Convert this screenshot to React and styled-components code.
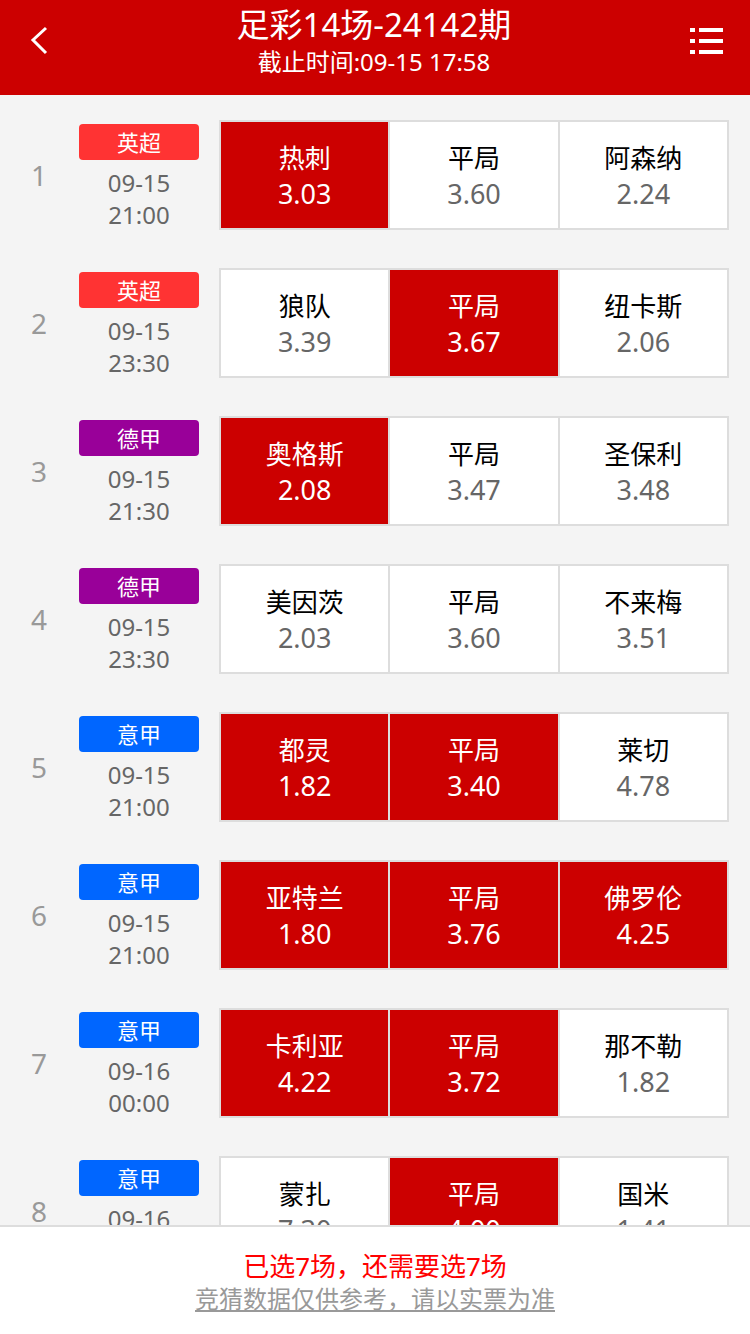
import React from 'react'
import styled, { createGlobalStyle } from 'styled-components'

const matches = [
  { league: '英超', color: '#ff3333', date: '09-15', time: '21:00', picks: [['热刺', '3.03', true], ['平局', '3.60', false], ['阿森纳', '2.24', false]] },
  { league: '英超', color: '#ff3333', date: '09-15', time: '23:30', picks: [['狼队', '3.39', false], ['平局', '3.67', true], ['纽卡斯', '2.06', false]] },
  { league: '德甲', color: '#990099', date: '09-15', time: '21:30', picks: [['奥格斯', '2.08', true], ['平局', '3.47', false], ['圣保利', '3.48', false]] },
  { league: '德甲', color: '#990099', date: '09-15', time: '23:30', picks: [['美因茨', '2.03', false], ['平局', '3.60', false], ['不来梅', '3.51', false]] },
  { league: '意甲', color: '#0066ff', date: '09-15', time: '21:00', picks: [['都灵', '1.82', true], ['平局', '3.40', true], ['莱切', '4.78', false]] },
  { league: '意甲', color: '#0066ff', date: '09-15', time: '21:00', picks: [['亚特兰', '1.80', true], ['平局', '3.76', true], ['佛罗伦', '4.25', true]] },
  { league: '意甲', color: '#0066ff', date: '09-16', time: '00:00', picks: [['卡利亚', '4.22', true], ['平局', '3.72', true], ['那不勒', '1.82', false]] },
  { league: '意甲', color: '#0066ff', date: '09-16', time: '02:45', picks: [['蒙扎', '7.30', false], ['平局', '4.00', true], ['国米', '1.41', false]] },
]

const GlobalStyle = createGlobalStyle`
  html, body {
    margin: 0;
    padding: 0;
    background: #f4f4f4;
    font-family: "Noto Sans", "Noto Sans CJK SC", sans-serif;
  }
`

const App = () => {
  return (
    <>
      <GlobalStyle />
      <Page>
        <Header>
          <IconBtn>
            <svg width="24" height="32" viewBox="0 0 24 32">
              <polyline points="17,3 4,15 17,28" fill="none" stroke="#fff" strokeWidth="3" />
            </svg>
          </IconBtn>
          <Titles>
            <Title>足彩14场-24142期</Title>
            <SubTitle>截止时间:09-15 17:58</SubTitle>
          </Titles>
          <IconBtn>
            <svg width="36" height="30" viewBox="0 0 36 30">
              <rect x="1" y="2" width="5" height="4" fill="#fff" />
              <rect x="10" y="2" width="24" height="4" fill="#fff" />
              <rect x="1" y="13" width="5" height="4" fill="#fff" />
              <rect x="10" y="13" width="24" height="4" fill="#fff" />
              <rect x="1" y="24" width="5" height="4" fill="#fff" />
              <rect x="10" y="24" width="24" height="4" fill="#fff" />
            </svg>
          </IconBtn>
        </Header>
        <List>
          {matches.map((m, i) => (
            <Row key={i}>
              <Index>{i + 1}</Index>
              <Info>
                <Badge color={m.color}>{m.league}</Badge>
                <DateText>{m.date}</DateText>
                <DateText>{m.time}</DateText>
              </Info>
              <Picks>
                {m.picks.map(([name, odds, on], j) => (
                  <Cell key={j} $on={on}>
                    <Team $on={on}>{name}</Team>
                    <Odds $on={on}>{odds}</Odds>
                  </Cell>
                ))}
              </Picks>
            </Row>
          ))}
        </List>
        <Footer>
          <Notice>已选7场，还需要选7场</Notice>
          <Disclaimer>竞猜数据仅供参考，请以实票为准</Disclaimer>
        </Footer>
      </Page>
    </>
  )
}

const Page = styled.div`
  width: 750px;
  height: 1334px;
  display: flex;
  flex-direction: column;
  background: #f4f4f4;
  overflow: hidden;
`

const Header = styled.div`
  height: 95px;
  flex-shrink: 0;
  background: #cc0000;
  display: flex;
  align-items: center;
  justify-content: space-between;
  padding: 0 23px 0 21px;
  box-sizing: border-box;
`

const IconBtn = styled.div`
  width: 40px;
  display: flex;
  justify-content: center;
  align-items: center;
  margin-top: -14px;
`

const Titles = styled.div`
  display: flex;
  flex-direction: column;
  align-items: center;
  color: #fff;
  margin-top: -9px;
`

const Title = styled.div`
  font-size: 33px;
  line-height: 38px;
`

const SubTitle = styled.div`
  font-size: 24px;
  line-height: 36px;
`

const List = styled.div`
  flex: 1;
  overflow: hidden;
  padding-top: 6px;
`

const Row = styled.div`
  height: 148px;
  display: flex;
  align-items: center;
  padding-right: 21px;
`

const Index = styled.div`
  width: 78px;
  text-align: center;
  font-size: 28px;
  color: #999;
`

const Info = styled.div`
  width: 120px;
  display: flex;
  flex-direction: column;
  align-items: center;
  margin-left: 1px;
  margin-right: 20px;
  padding-top: 5px;
`

const Badge = styled.div`
  width: 120px;
  height: 36px;
  line-height: 36px;
  border-radius: 4px;
  background: ${(p) => p.color};
  color: #fff;
  font-size: 22px;
  text-align: center;
  margin-bottom: 7px;
`

const DateText = styled.div`
  font-size: 24px;
  line-height: 32px;
  color: #666;
`

const Picks = styled.div`
  flex: 1;
  height: 110px;
  display: grid;
  grid-template-columns: 1fr 1fr 1fr;
  gap: 2px;
  border: 2px solid #dddddd;
  background: #dddddd;
  box-sizing: border-box;
`

const Cell = styled.div`
  background: ${(p) => (p.$on ? '#cc0000' : '#fff')};
  display: flex;
  flex-direction: column;
  align-items: center;
  justify-content: center;
  padding-top: 1px;
`

const Team = styled.div`
  font-size: 26px;
  line-height: 36px;
  color: ${(p) => (p.$on ? '#fff' : '#000')};
`

const Odds = styled.div`
  font-size: 27px;
  line-height: 36px;
  color: ${(p) => (p.$on ? '#fff' : '#666')};
`

const Footer = styled.div`
  height: 109px;
  flex-shrink: 0;
  background: #fff;
  border-top: 2px solid #dddddd;
  box-sizing: border-box;
  display: flex;
  flex-direction: column;
  align-items: center;
  justify-content: center;
  padding-top: 2px;
`

const Notice = styled.div`
  font-size: 26px;
  line-height: 34px;
  color: #ff0000;
`

const Disclaimer = styled.div`
  font-size: 24px;
  line-height: 32px;
  color: #999;
  text-decoration: underline;
`

export default App
